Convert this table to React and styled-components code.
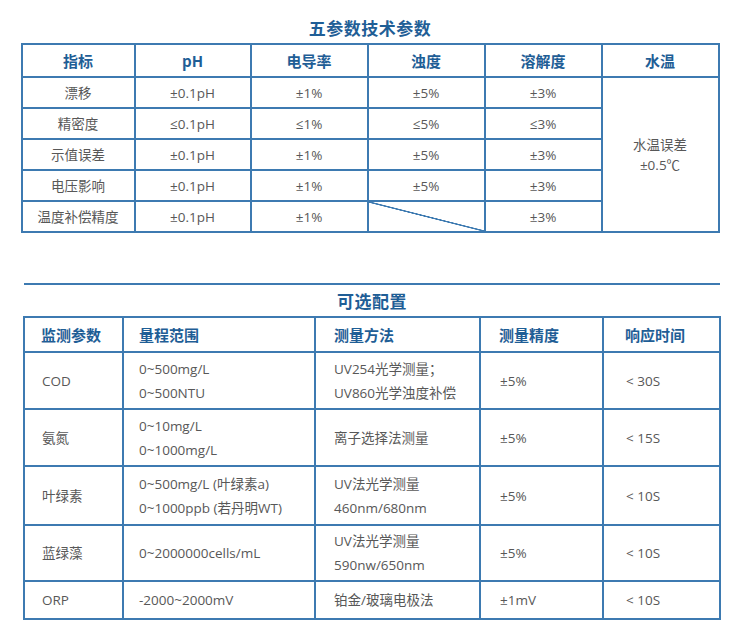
import React from 'react';
import styled, { createGlobalStyle } from 'styled-components';

const GlobalStyle = createGlobalStyle`
  html, body {
    margin: 0;
    padding: 0;
    background: #ffffff;
  }
  body {
    font-family: "Open Sans", "Noto Sans CJK SC", sans-serif;
  }
`;

const BLUE_LINE = '#3d7ab1';
const BLUE_TEXT = '#1f5e96';
const GREY_TEXT = '#585858';

const Page = styled.div`
  width: 738px;
  height: 637px;
  overflow: hidden;
`;

const Section = styled.section`
  display: flex;
  flex-direction: column;
  align-items: center;
  padding: ${p => p.pad};
`;

const Title = styled.h2`
  margin: 0;
  height: ${p => p.h}px;
  line-height: ${p => p.h}px;
  font-family: "Noto Sans CJK SC", sans-serif;
  font-size: 17px;
  font-weight: 700;
  letter-spacing: 0.5px;
  color: ${BLUE_TEXT};
`;

const Rule = styled.div`
  align-self: stretch;
  height: 2px;
  background: ${BLUE_LINE};
`;

const Table = styled.table`
  width: ${p => p.w}px;
  border-collapse: collapse;
  table-layout: fixed;
  border: 2px solid ${BLUE_LINE};
`;

const HeadCell = styled.th`
  border: 2px solid ${BLUE_LINE};
  color: ${BLUE_TEXT};
  font-family: "Noto Sans CJK SC", sans-serif;
  font-size: 15px;
  font-weight: 700;
  text-align: ${p => (p.pl != null ? 'left' : 'center')};
  padding: 0 0 0 ${p => p.pl || 0}px;
`;

const Cell = styled.td`
  border: 2px solid ${BLUE_LINE};
  color: ${GREY_TEXT};
  font-size: 13.5px;
  font-weight: 400;
  text-align: ${p => (p.pl != null ? 'left' : 'center')};
  padding: 0 0 0 ${p => p.pl || 0}px;
  line-height: ${p => p.lh || 18}px;
  background: ${p => p.slash
    ? `linear-gradient(to top right, transparent calc(50% - 1px), ${BLUE_LINE} calc(50% - 0.5px), ${BLUE_LINE} calc(50% + 0.5px), transparent calc(50% + 1px))`
    : 'transparent'};
`;

const Row = styled.tr`
  height: ${p => p.h}px;
`;

const fiveParams = [
  ['漂移', '±0.1pH', '±1%', '±5%', '±3%'],
  ['精密度', '≤0.1pH', '≤1%', '≤5%', '≤3%'],
  ['示值误差', '±0.1pH', '±1%', '±5%', '±3%'],
  ['电压影响', '±0.1pH', '±1%', '±5%', '±3%'],
  ['温度补偿精度', '±0.1pH', '±1%', null, '±3%'],
];

const optionCols = [
  { label: '监测参数', width: 99, pl: 16 },
  { label: '量程范围', width: 192, pl: 15 },
  { label: '测量方法', width: 165, pl: 18 },
  { label: '测量精度', width: 123, pl: 18 },
  { label: '响应时间', width: 117, pl: 21 },
];

const options = [
  { name: 'COD', range: ['0~500mg/L', '0~500NTU'], method: ['UV254光学测量；', 'UV860光学浊度补偿'], acc: '±5%', time: '< 30S', h: 57 },
  { name: '氨氮', range: ['0~10mg/L', '0~1000mg/L'], method: ['离子选择法测量'], acc: '±5%', time: '< 15S', h: 57 },
  { name: '叶绿素', range: ['0~500mg/L (叶绿素a)', '0~1000ppb (若丹明WT)'], method: ['UV法光学测量', '460nm/680nm'], acc: '±5%', time: '< 10S', h: 59 },
  { name: '蓝绿藻', range: ['0~2000000cells/mL'], method: ['UV法光学测量', '590nw/650nm'], acc: '±5%', time: '< 10S', h: 56 },
  { name: 'ORP', range: ['-2000~2000mV'], method: ['铂金/玻璃电极法'], acc: '±1mV', time: '< 10S', h: 38 },
];

const Lines = ({ items }) => items.map((t, i) => (
  <React.Fragment key={i}>
    {i > 0 && <br />}
    {t}
  </React.Fragment>
));

export default function App() {
  return (
    <Page>
      <GlobalStyle />

      <Section pad="12px 0 0 2px">
        <Title h={31}>五参数技术参数</Title>
        <Table w={697}>
          <colgroup>
            <col style={{ width: 113 }} />
            <col style={{ width: 116 }} />
            <col style={{ width: 117 }} />
            <col style={{ width: 117 }} />
            <col style={{ width: 117 }} />
            <col style={{ width: 117 }} />
          </colgroup>
          <thead>
            <Row h={33}>
              <HeadCell>指标</HeadCell>
              <HeadCell>pH</HeadCell>
              <HeadCell>电导率</HeadCell>
              <HeadCell>浊度</HeadCell>
              <HeadCell>溶解度</HeadCell>
              <HeadCell>水温</HeadCell>
            </Row>
          </thead>
          <tbody>
            {fiveParams.map((r, i) => (
              <Row h={31} key={r[0]}>
                <Cell>{r[0]}</Cell>
                <Cell>{r[1]}</Cell>
                <Cell>{r[2]}</Cell>
                <Cell slash={r[3] === null}>{r[3]}</Cell>
                <Cell>{r[4]}</Cell>
                {i === 0 && (
                  <Cell rowSpan={5} lh={20}>
                    水温误差<br />±0.5℃
                  </Cell>
                )}
              </Row>
            ))}
          </tbody>
        </Table>
      </Section>

      <Section pad="50px 18px 0 24px">
        <Rule />
        <Title h={31}>可选配置</Title>
        <Table w={696}>
          <colgroup>
            {optionCols.map(c => <col key={c.label} style={{ width: c.width }} />)}
          </colgroup>
          <thead>
            <Row h={35}>
              {optionCols.map(c => <HeadCell key={c.label} pl={c.pl}>{c.label}</HeadCell>)}
            </Row>
          </thead>
          <tbody>
            {options.map(o => (
              <Row h={o.h} key={o.name}>
                <Cell pl={17}>{o.name}</Cell>
                <Cell pl={15} lh={24}><Lines items={o.range} /></Cell>
                <Cell pl={18} lh={24}><Lines items={o.method} /></Cell>
                <Cell pl={19}>{o.acc}</Cell>
                <Cell pl={22}>{o.time}</Cell>
              </Row>
            ))}
          </tbody>
        </Table>
      </Section>
    </Page>
  );
}
